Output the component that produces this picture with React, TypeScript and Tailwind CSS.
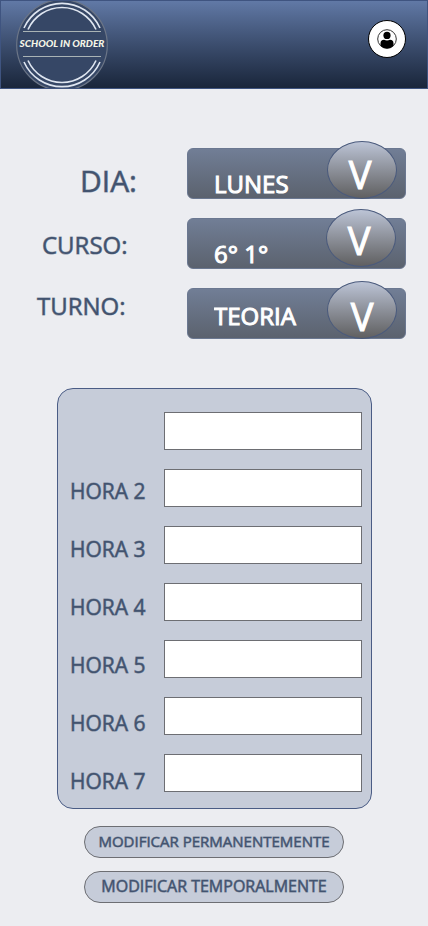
const selects = [
  {
    id: "dia",
    label: "DIA:",
    labelClass: "pl-20 text-[30px] leading-10",
    options: ["LUNES", "MARTES", "MIERCOLES", "JUEVES", "VIERNES"],
    selectClass: "pt-5",
    knobClass: "right-[9px] bottom-0 pt-2 pr-1",
  },
  {
    id: "curso",
    label: "CURSO:",
    labelClass: "pl-[42px] text-2xl leading-[34px]",
    options: ["6° 1°", "6° 2°"],
    selectClass: "pt-5",
    knobClass: "right-[10px] bottom-[2px] pt-1 pr-1",
  },
  {
    id: "turno",
    label: "TURNO:",
    labelClass: "pl-[37px] text-2xl leading-[34px]",
    options: ["TEORIA", "TALLER"],
    selectClass: "pt-1",
    knobClass: "right-[9px] bottom-0 pt-3",
  },
];

const hours = [1, 2, 3, 4, 5, 6, 7];

function Logo() {
  return (
    <svg viewBox="0 0 94 87" className="ml-[14px] h-[87px] w-[94px]" role="img" aria-label="School in Order">
      <circle cx="47" cy="44" r="45.3" fill="#364766" stroke="#6b7587" strokeWidth="1.2" />
      <g fill="none" stroke="#dfe6f1" strokeWidth="1.6">
        <path d="M9 27 A41.6 41.6 0 0 1 85 27" />
        <path d="M13 28.5 A37.3 37.3 0 0 1 81 28.5" />
        <path d="M9 61 A41.6 41.6 0 0 0 85 61" />
        <path d="M13 59.5 A37.3 37.3 0 0 0 81 59.5" />
      </g>
      <path d="M8 30.5 H86 M8 55.5 H86" stroke="#a9b3b5" strokeWidth="1" />
      <text
        x="47"
        y="46"
        textAnchor="middle"
        fill="#f4f5e6"
        className="font-['Lato',sans-serif] text-[10px] font-black italic"
      >
        SCHOOL IN ORDER
      </text>
    </svg>
  );
}

export default function App() {
  return (
    <div className="min-h-screen bg-[#ecedf1] font-['Open_Sans',sans-serif] text-[#42536f] [-webkit-text-stroke:1px_#42536f90]">
      <header className="flex h-[89px] items-center justify-between overflow-hidden border border-[#3f5480] bg-linear-to-b from-[#6179a6] to-[#1a263b] pr-[21px] [-webkit-text-stroke-width:0]">
        <Logo />
        <button type="button" aria-label="Perfil" className="mb-3 size-[38px] rounded-full border border-black bg-white">
          <svg viewBox="0 0 36 36" className="size-9">
            <defs>
              <clipPath id="face">
                <circle cx="18" cy="18" r="9.5" />
              </clipPath>
            </defs>
            <circle cx="18" cy="18" r="9.3" fill="white" stroke="#333" strokeWidth="1" />
            <g clipPath="url(#face)">
              <circle cx="18" cy="14.4" r="3.6" />
              <path d="M11.5 28 V22.5 Q11.5 18.8 15 18.8 Q18 20 21 18.8 Q24.5 18.8 24.5 22.5 V28 Z" />
            </g>
          </svg>
        </button>
      </header>

      <main>
        <section className="flex pt-[59px] pr-[22px]">
          <div className="flex w-[187px] flex-col gap-[27px] pt-[13px]">
            {selects.map((s) => (
              <label key={s.id} htmlFor={s.id} className={s.labelClass}>
                {s.label}
              </label>
            ))}
          </div>
          <div className="flex flex-1 flex-col gap-[19px]">
            {selects.map((s) => (
              <div key={s.id} className="relative">
                <select
                  id={s.id}
                  className={`block h-[51px] w-full appearance-none rounded-md border border-[#6b7891] bg-linear-to-b from-[#717e96] to-[#5b626e] pl-[26px] text-2xl leading-7 text-white [-webkit-text-stroke:1px_#ffffff] ${s.selectClass}`}
                >
                  {s.options.map((o) => (
                    <option key={o}>{o}</option>
                  ))}
                </select>
                <span
                  aria-hidden="true"
                  className={`pointer-events-none absolute flex h-[58px] w-[70px] items-center justify-center rounded-[50%] border border-[#4a5a7c] bg-linear-to-b from-[#bcc4d6] to-[#606061] text-[38px] leading-none text-white [-webkit-text-stroke:1px_#ffffff] ${s.knobClass}`}
                >
                  V
                </span>
              </div>
            ))}
          </div>
        </section>

        <section className="mt-[49px] mr-14 ml-[57px] flex rounded-2xl border border-[#4a5c85] bg-[#c6ccd9] pr-[9px] pb-3">
          <div className="flex w-[106px] flex-col gap-7 pt-[87px] pl-3">
            {hours.slice(1).map((h) => (
              <label key={h} htmlFor={`hora-${h}`} className="text-[21px] leading-[30px]">
                HORA {h}
              </label>
            ))}
          </div>
          <div className="flex flex-1 flex-col gap-[19px] pt-[23px]">
            {hours.map((h) => (
              <input
                key={h}
                id={`hora-${h}`}
                type="text"
                aria-label={`Hora ${h}`}
                className="h-[38px] w-full border border-[#6d6e73] bg-white px-2"
              />
            ))}
          </div>
        </section>

        <div className="flex flex-col items-center gap-[13px] pt-[17px] pb-[23px]">
          <button type="button" className="h-8 w-[260px] rounded-full border border-[#6d6e73] bg-[#c6ccd9] pb-px text-[15px] [-webkit-text-stroke:1px_#42536f90]">
            MODIFICAR PERMANENTEMENTE
          </button>
          <button type="button" className="h-8 w-[260px] rounded-full border border-[#6d6e73] bg-[#c6ccd9] pb-[3px] text-base [-webkit-text-stroke:1px_#42536f90]">
            MODIFICAR TEMPORALMENTE
          </button>
        </div>
      </main>
    </div>
  );
}
